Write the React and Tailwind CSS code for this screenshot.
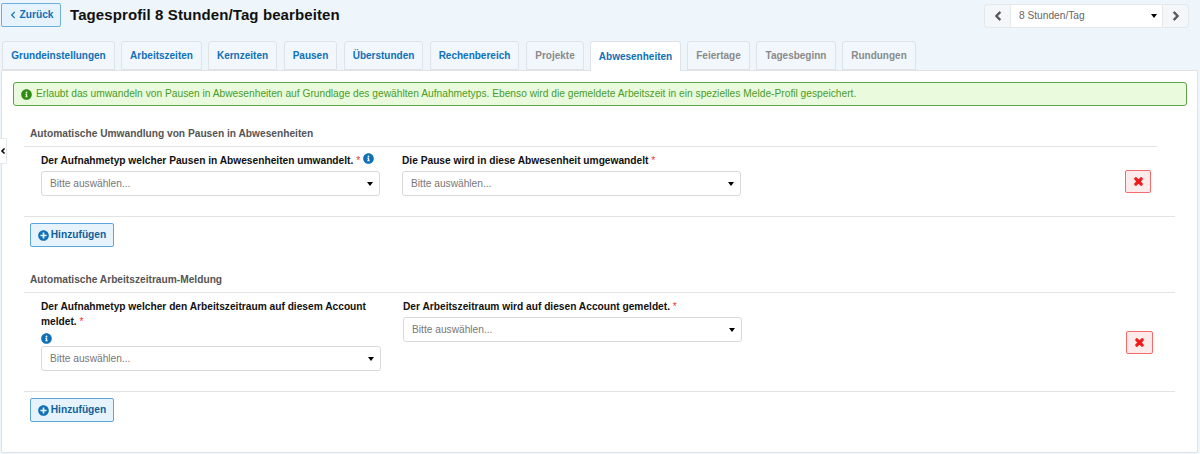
import { FaChevronLeft, FaChevronRight, FaInfoCircle, FaPlusCircle, FaTimes } from "react-icons/fa";

const tabs = [
    { label: "Grundeinstellungen", w: "w-[113px]", ml: "ml-0" },
    { label: "Arbeitszeiten", w: "w-[81px]", ml: "ml-[6px]" },
    { label: "Kernzeiten", w: "w-[69px]", ml: "ml-[6px]" },
    { label: "Pausen", w: "w-[53px]", ml: "ml-[7px]" },
    { label: "Überstunden", w: "w-[79px]", ml: "ml-[7px]" },
    { label: "Rechenbereich", w: "w-[89px]", ml: "ml-[7px]" },
    { label: "Projekte", w: "w-[58px]", ml: "ml-[7px]", off: true },
    { label: "Abwesenheiten", w: "w-[91px]", ml: "ml-[6px]", active: true },
    { label: "Feiertage", w: "w-[63px]", ml: "ml-[6px]", off: true },
    { label: "Tagesbeginn", w: "w-[80px]", ml: "ml-[6px]", off: true },
    { label: "Rundungen", w: "w-[74px]", ml: "ml-[6px]", off: true },
];

const Tab = ({ tab }) => {
    const color = tab.off ? "text-[#8a8a8a]" : "text-[#0f70b7]";
    const bg = tab.active ? "bg-white h-[30px] -mb-px border-b-0 relative z-10" : "bg-[#f1f7fc] h-[29px]";
    return (
        <div className={`${tab.w} ${tab.ml} ${bg} ${color} flex items-center justify-center rounded-t-[3px] border border-[#dfe3e6] text-[10px] font-bold`}>
            {tab.label}
        </div>
    );
};

const Select = ({ w }) => (
    <div className={`${w} h-[25px] flex items-center justify-between rounded-[3px] border border-[#d9d9d9] bg-white pl-[8px] pr-[6px] text-[10.2px] text-[#777]`}>
        <span>Bitte auswählen...</span>
        <span className="h-0 w-0 border-x-[3px] border-t-[4px] border-x-transparent border-t-black" />
    </div>
);

const Req = () => <span className="font-normal text-[#e33]"> *</span>;

const Label = ({ children }) => (
    <div className="text-[10.2px] font-bold leading-[15px] text-[#111]">{children}</div>
);

const DeleteButton = ({ w }) => (
    <button className={`${w} flex h-[23px] items-center justify-center rounded-[2px] border border-[#f56a6a] bg-[#fdeaea] text-[11px] text-[#f01818]`}>
        <FaTimes stroke="currentColor" strokeWidth={50} />
    </button>
);

const AddButton = () => (
    <button className="flex h-[24px] w-[84px] items-center justify-center gap-[2px] rounded-[2px] border border-[#5ba6da] bg-[#e6f3fc] text-[10.2px] font-bold text-[#0f5f9c]">
        <FaPlusCircle className="text-[11px] text-[#0f70b7]" />
        Hinzufügen
    </button>
);

const SectionTitle = ({ children }) => (
    <div className="ml-[6px] text-[10.2px] font-bold leading-[14px] text-[#555]">{children}</div>
);

export default function App() {
    return (
        <div className="relative h-[454px] w-[1200px] overflow-hidden bg-[#eef5fb] font-['Liberation_Sans',Arial,sans-serif]">
            {/* header */}
            <div className="flex h-[41px] items-start pt-[3px] pl-px pr-[11px]">
                <button className="flex h-[24px] w-[60px] items-center justify-center gap-[3px] rounded-[2px] border border-[#6db0de] bg-[#e6f3fc] text-[10.2px] font-bold text-[#0f70b7]">
                    <FaChevronLeft className="text-[8px]" />
                    Zurück
                </button>
                <h1 className="ml-[9px] text-[15px] font-bold leading-[23px] tracking-[0.1px] text-[#111]">
                    Tagesprofil 8 Stunden/Tag bearbeiten
                </h1>
                <div className="ml-auto mt-px flex h-[24px] w-[205px] rounded-[3px] border border-[#e6e9ec] bg-[#f4f7f9] text-[#555]">
                    <div className="flex w-[25px] items-center justify-center text-[10px]"><FaChevronLeft stroke="currentColor" strokeWidth={50} /></div>
                    <div className="flex flex-1 items-center justify-between border-x border-[#e6e9ec] bg-white pl-[8px] pr-[5px] text-[10.2px] text-[#666]">
                        <span>8 Stunden/Tag</span>
                        <span className="h-0 w-0 border-x-[3px] border-t-[4px] border-x-transparent border-t-black" />
                    </div>
                    <div className="flex w-[25px] items-center justify-center text-[10px]"><FaChevronRight stroke="currentColor" strokeWidth={50} /></div>
                </div>
            </div>

            {/* tabs */}
            <div className="flex pl-[2px]">
                {tabs.map(tab => <Tab key={tab.label} tab={tab} />)}
            </div>

            {/* panel */}
            <div className="relative ml-px h-[383px] w-[1197px] rounded-b-[3px] border border-[#dfe3e6] bg-white pt-[11px] pl-[11px]">
                <div className="flex h-[24px] w-[1174px] items-center gap-[4px] rounded-[3px] border border-[#5fa547] bg-[#e9fbdc] pl-[7px] text-[10.22px] text-[#4a9c28]">
                    <FaInfoCircle className="text-[11px] text-[#2f8a12]" />
                    Erlaubt das umwandeln von Pausen in Abwesenheiten auf Grundlage des gewählten Aufnahmetyps. Ebenso wird die gemeldete Arbeitszeit in ein spezielles Melde-Profil gespeichert.
                </div>

                {/* Umwandlung */}
                <div className="ml-[11px] mt-[21px]">
                    <SectionTitle>Automatische Umwandlung von Pausen in Abwesenheiten</SectionTitle>
                    <div className="mt-[5px] w-[1133px] border-t border-[#e3e3e3]" />
                    <div className="flex w-[1151px] border-b border-[#e3e3e3] pb-[20px] pl-[17px] pt-[6px]">
                        <div className="w-[339px]">
                            <Label>Der Aufnahmetyp welcher Pausen in Abwesenheiten umwandelt.<Req /> <FaInfoCircle className="inline align-top text-[11px] text-[#0f70b7]" /></Label>
                            <div className="mt-[3px]"><Select w="w-[339px]" /></div>
                        </div>
                        <div className="ml-[22px] w-[339px]">
                            <Label>Die Pause wird in diese Abwesenheit umgewandelt<Req /></Label>
                            <div className="mt-[3px]"><Select w="w-[339px]" /></div>
                        </div>
                        <div className="ml-[384px] mt-[17px]"><DeleteButton w="w-[26px]" /></div>
                    </div>
                    <div className="ml-[6px] mt-[6px]"><AddButton /></div>
                </div>

                {/* Meldung */}
                <div className="ml-[11px] mt-[26px]">
                    <SectionTitle>Automatische Arbeitszeitraum-Meldung</SectionTitle>
                    <div className="mt-[5px] w-[1151px] border-t border-[#e3e3e3]" />
                    <div className="flex w-[1151px] border-b border-[#e3e3e3] pb-[20px] pl-[17px] pt-[6px]">
                        <div className="w-[340px]">
                            <Label>Der Aufnahmetyp welcher den Arbeitszeitraum auf diesem Account meldet.<Req /></Label>
                            <div className="leading-[17px]"><FaInfoCircle className="inline text-[11px] text-[#0f70b7]" /></div>
                            <Select w="w-[340px]" />
                        </div>
                        <div className="ml-[22px] w-[339px]">
                            <Label>Der Arbeitszeitraum wird auf diesen Account gemeldet.<Req /></Label>
                            <div className="mt-[3px]"><Select w="w-[339px]" /></div>
                        </div>
                        <div className="ml-[384px] mt-[32px]"><DeleteButton w="w-[27px]" /></div>
                    </div>
                    <div className="ml-[6px] mt-[6px]"><AddButton /></div>
                </div>
            </div>

            {/* collapsed side handle */}
            <div className="absolute left-0 top-[138px] flex h-[26px] w-[7px] items-center rounded-r-[2px] border border-l-0 border-[#e3e7ea] bg-white text-[6px] text-black">
                <FaChevronLeft stroke="currentColor" strokeWidth={60} />
            </div>
        </div>
    );
}
